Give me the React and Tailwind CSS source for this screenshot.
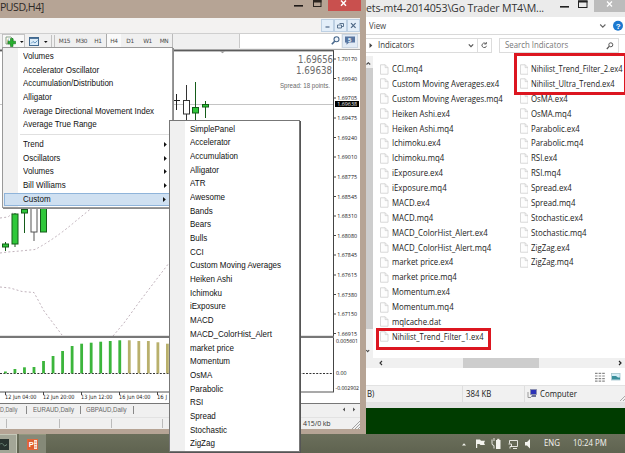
import React from "react";

const menuTop = [
  "Volumes",
  "Accelerator Oscillator",
  "Accumulation/Distribution",
  "Alligator",
  "Average Directional Movement Index",
  "Average True Range",
];
const menuGroups = ["Trend", "Oscillators", "Volumes", "Bill Williams", "Custom"];
const customItems = [
  "SimplePanel", "Accelerator", "Accumulation", "Alligator", "ATR", "Awesome",
  "Bands", "Bears", "Bulls", "CCI", "Custom Moving Averages", "Heiken Ashi",
  "Ichimoku", "iExposure", "MACD", "MACD_ColorHist_Alert", "market price",
  "Momentum", "OsMA", "Parabolic", "RSI", "Spread", "Stochastic", "ZigZag",
];
const filesLeft = [
  "CCI.mq4", "Custom Moving Averages.ex4", "Custom Moving Averages.mq4",
  "Heiken Ashi.ex4", "Heiken Ashi.mq4", "Ichimoku.ex4", "Ichimoku.mq4",
  "iExposure.ex4", "iExposure.mq4", "MACD.ex4", "MACD.mq4",
  "MACD_ColorHist_Alert.ex4", "MACD_ColorHist_Alert.mq4", "market price.ex4",
  "market price.mq4", "Momentum.ex4", "Momentum.mq4", "mqlcache.dat",
  "Nihilist_Trend_Filter_1.ex4",
];
const filesRight = [
  "Nihilist_Trend_Filter_2.ex4", "Nihilist_Ultra_Trend.ex4", "OsMA.ex4",
  "OsMA.mq4", "Parabolic.ex4", "Parabolic.mq4", "RSI.ex4", "RSI.mq4",
  "Spread.ex4", "Spread.mq4", "Stochastic.ex4", "Stochastic.mq4",
  "ZigZag.ex4", "ZigZag.mq4",
];
const prices = [
  ["1.70170", 59], ["1.69940", 78.5], ["1.69705", 98], ["1.69475", 118],
  ["1.69240", 137.5], ["1.69010", 157], ["1.68775", 177], ["1.68545", 196.5],
  ["1.68310", 216], ["1.68080", 235.5], ["1.67845", 255], ["1.67615", 275],
  ["1.67380", 294.5], ["1.67150", 314], ["1.66915", 333.5],
];
const barTops = [371.5, 369, 367.3, 367, 361, 356, 351, 346, 343.7, 342.7, 341.7, 341, 340.3, 340.3, 341, 341, 342.3, 343.7];
const times = [["12 Jun 04:00", 5, 31.5], ["12 Jun 20:00", 43, 31.5], ["13 Jun 12:00", 81, 31.5], ["16 Jun 04:00", 119, 31.5], ["16 J", 157, 10]];

/* Condensed label in the system interface face. */
function Label({ children, tight }) {
  return (
    <span className={tight
      ? "inline-block origin-left scale-x-[0.86] whitespace-nowrap text-[8.8px]"
      : "inline-block origin-left scale-x-[0.89] whitespace-nowrap text-[8.8px]"}>{children}</span>
  );
}

function Candle({ x, top, bottom, high, low, fill = "#2fc83a", stroke = "#145c19", w = 6 }) {
  return (
    <g stroke={stroke} strokeWidth="1">
      <line x1={x} x2={x} y1={high} y2={low} />
      <rect x={x - w / 2} y={top} width={w} height={bottom - top} fill={fill} />
    </g>
  );
}

function Chart() {
  return (
    <svg className="block h-[355px] w-[360px]" viewBox="0 49 360 355" fontFamily="'Liberation Sans', sans-serif">
      <rect x="0" y="49" width="360" height="355" fill="#fff" />
      <rect x="0" y="49" width="360" height="1" fill="#a8a8a8" />
      <rect x="0" y="50" width="334" height="1.4" fill="#5c5c5c" />
      <path d="M220 51.3h5l-2.5 2z" fill="#999" />
      <line x1="0" x2="334" y1="104.5" y2="104.5" stroke="#c4c4c4" />
      <g stroke="#b9a9b3" fill="none" strokeDasharray="2 2.2" strokeWidth="0.9">
        <path d="M0 253L8 252L20 251L35 249.5Q55 239 77 220L93 207" />
        <path d="M0 218L8 217L14 212" />
        <path d="M0 287L10 288L22 291.5L34 292.5L44 311L62 335" />
        <path d="M113 336L124 323L140 301L156 280L169 263" />
      </g>
      <Candle x={5.5} top={244} bottom={247} high={242} low={251} />
      <Candle x={15} top={214} bottom={244} high={213} low={247} />
      <Candle x={24.5} top={209.5} bottom={213} high={207} low={233} />
      <Candle x={34} top={205} bottom={232} high={205} low={241} fill="#fff" stroke="#555" />
      <Candle x={43.5} top={205} bottom={232} high={205} low={232} />
      <g stroke="#222" fill="none"><path d="M176.5 94v16M173 100.5h7" /></g>
      <Candle x={186.5} top={100.5} bottom={114} high={85} low={120} fill="#fff" stroke="#333" />
      <Candle x={195.5} top={107.5} bottom={113} high={82} low={120} />
      <Candle x={205.5} top={104.5} bottom={107} high={101} low={118} />
      <g fill="#6a6a6a" fontFamily="'DejaVu Sans', sans-serif">
        <text x="298" y="62.7" fontSize="9.8" textLength="35" lengthAdjust="spacingAndGlyphs">1.69656</text>
        <text x="296" y="74.2" fontSize="9.8" textLength="36" lengthAdjust="spacingAndGlyphs">1.69638</text>
        <text x="280" y="88" fontSize="6.8" textLength="50" lengthAdjust="spacingAndGlyphs" fontFamily="'Liberation Sans', sans-serif">Spread: 18 points.</text>
      </g>
      <line x1="333.5" x2="333.5" y1="51" y2="392" stroke="#444" />
      <g fontFamily="'Open Sans', 'Noto Sans', sans-serif" fontSize="5.7" fill="#111">
        {prices.map(([p, y]) => (
          <g key={p}>
            <line x1="334" x2="336" y1={y} y2={y} stroke="#333" strokeWidth="0.9" />
            <text x="337.3" y={y + 2.1} textLength="19.7" lengthAdjust="spacingAndGlyphs">{p}</text>
          </g>
        ))}
        <rect x="335" y="101" width="24" height="6" fill="#000" />
        <text x="337.3" y="106.1" textLength="19.7" lengthAdjust="spacingAndGlyphs" fill="#eee">1.69638</text>
        <text x="336" y="343.4" fontSize="5.3" textLength="22" lengthAdjust="spacingAndGlyphs">0.005601</text>
        <text x="336" y="375.1" textLength="10.5" lengthAdjust="spacingAndGlyphs">0.00</text>
        <text x="335.5" y="389.8" fontSize="5" textLength="23.5" lengthAdjust="spacingAndGlyphs">-0.002902</text>
      </g>
      <rect x="0" y="335.8" width="334" height="2.2" fill="#777" />
      <line x1="0" x2="334" y1="373.5" y2="373.5" stroke="#333" strokeDasharray="2 1.4" />
      {barTops.map((t, i) => (
        <rect key={i} x={4 + i * 9.53} y={t} width="2.8" height={373.3 - t} fill={i < 13 ? "#3cb53c" : "#b9b06c"} />
      ))}
      <line x1="0" x2="334" y1="392" y2="392" stroke="#555" strokeWidth="1.2" />
      <g fontFamily="'DejaVu Sans', sans-serif" fontSize="5.9" fill="#222">
        {times.map(([t, x, w]) => (
          <g key={t}>
            <line x1={x + 0.5} x2={x + 0.5} y1="392" y2="395" stroke="#444" />
            <text x={x} y="399.4" textLength={w} lengthAdjust="spacingAndGlyphs">{t}</text>
          </g>
        ))}
      </g>
      <rect x="0" y="403" width="360" height="1" fill="#777" />
    </svg>
  );
}

function MdiButton({ children }) {
  return (
    <div className="flex h-[13px] w-[13px] items-center justify-center border border-[#bdd0e3] bg-[#e3eef9]">
      <svg className="h-[9px] w-[9px]" viewBox="0 0 9 9" fill="none" stroke="#4d6785" strokeWidth="1.2">{children}</svg>
    </div>
  );
}

function TabName({ children }) {
  return <span className="inline-block origin-left scale-x-[0.86] whitespace-nowrap">{children}</span>;
}

function TerminalWindow() {
  return (
    <div className="flex h-[434px] w-[366px] shrink-0 flex-col bg-[#b6a495]">
      <div className="flex h-[18px] w-[366px] items-start">
        <div className="w-[289px] font-['Open_Sans','Noto_Sans',sans-serif] text-[10.6px] leading-[15px] tracking-[-0.5px] text-[#2d2825]">PUSD,H4]</div>
        <svg className="block h-[12px] w-[77px]" viewBox="289 0 77 12">
          <rect x="294" y="5" width="9" height="1.6" fill="#1f1a18" />
          <rect x="313.5" y="0.5" width="7.5" height="6" fill="none" stroke="#2a2420" />
          <rect x="313" y="0" width="8.5" height="2.5" fill="#2a2420" />
          <rect x="328" y="0" width="33" height="11" fill="#c9504e" />
          <path d="M341 0.5L346 5.8M346 0.5L341 5.8" stroke="#fff" strokeWidth="1.4" />
        </svg>
      </div>
      <div className="flex h-[15px] w-[360px] items-center justify-end bg-[#f3f2f1]">
        <MdiButton><path d="M2.5 6h4" /></MdiButton>
        <MdiButton><path d="M3.5 2.5h4v3h-1.5M1.5 4h4v3h-4z" strokeWidth="0.9" /></MdiButton>
        <MdiButton><path d="M2 2.2l4.6 4.6M6.6 2.2L2 6.8" /></MdiButton>
      </div>
      <div className="flex h-[16px] w-[360px] items-start border-t border-[#cfcfcf] bg-[#f0f0f0]">
        <svg className="block h-[15px] w-[56px]" viewBox="0 34 56 15">
          <rect x="2.5" y="34.5" width="22" height="14" fill="#f8f8f8" stroke="#b8b8b8" strokeWidth="0.8" />
          <path d="M6 37h5l2 2v5h-7z" fill="#fff" stroke="#7d9a7d" strokeWidth="0.9" />
          <text x="7" y="42.5" fontSize="6" fontStyle="italic" fontFamily="'Liberation Serif', serif" fill="#397239">f</text>
          <path d="M10.5 38.5h2.5v2.7h2.5v2.6h-2.5v2.7h-2.5v-2.7H8v-2.6h2.5z" fill="#27b02e" stroke="#137318" strokeWidth="0.6" />
          <path d="M20 41h3.6l-1.8 2z" fill="#111" />
          <rect x="29.5" y="37.5" width="9" height="8" fill="#dcecf8" stroke="#41698f" />
          <path d="M29.5 38.3h9" stroke="#41698f" strokeWidth="1.2" />
          <path d="M31 43.5l2-2 2 1.5 2.5-2.5" fill="none" stroke="#4a84b5" strokeWidth="0.8" />
          <path d="M44 41h3.6l-1.8 2z" fill="#111" />
          <path d="M51.5 35v13M54.5 35v13" stroke="#bbb" strokeWidth="0.9" />
        </svg>
        <div className="flex h-[14px] w-[118px] items-center font-['DejaVu_Sans',sans-serif] text-[5.8px] leading-[14px] tracking-[-0.35px] text-[#4a4a4a]">
          <span className="w-[17px] text-center">M15</span>
          <span className="w-[17px] text-center">M30</span>
          <span className="w-[16px] text-center">H1</span>
          <span className="h-[14px] w-[15px] border-l border-[#aaa] bg-[#fafafa] text-center">H4</span>
          <span className="w-[18px] text-center">D1</span>
          <span className="w-[17px] text-center">W1</span>
          <span className="w-[17px] border-r border-[#bbb] text-center">MN</span>
        </div>
        <div className="w-[65px]" />
        <div className="flex h-[14px] w-[102px] justify-end border-l border-[#c9c9c9] bg-white">
          <svg className="mt-[2px] mr-[1px] h-[9px] w-[9px]" viewBox="0 0 9 9" fill="#f2f7fc" stroke="#48688c" strokeWidth="1.1">
            <circle cx="5.5" cy="3.3" r="2.5" /><path d="M3.7 5.2L0.8 8.3" strokeWidth="1.6" />
          </svg>
        </div>
        <svg className="block h-[14px] w-[18px]" viewBox="0 0 18 14">
          <rect x="1.5" y="0.5" width="15" height="13" fill="#e2ebf5" stroke="#cbd6e2" />
          <path d="M4 2.5h10v6H8l-2.5 2.2V8.5H4z" fill="#5875a0" />
          <text x="7" y="7.8" fontSize="6" fontWeight="bold" fill="#fff" fontFamily="'Liberation Sans', sans-serif">5</text>
        </svg>
      </div>
      <Chart />
      <div className="flex h-[13px] w-[360px] items-center bg-[#f0f0f0] pb-[2px] font-['Liberation_Sans',sans-serif] text-[7.1px] text-[#686868]">
        <span className="w-[27px] border-r border-[#888] leading-[8px]"><span className="inline-block origin-left scale-x-[0.76] whitespace-nowrap">D,Daily</span></span>
        <span className="w-[54px] border-r border-[#888] pl-[6px] leading-[8px]"><TabName>EURAUD,Daily</TabName></span>
        <span className="w-[53px] border-r border-[#888] pl-[5px] leading-[8px]"><TabName>GBPAUD,Daily</TabName></span>
        <svg className="ml-auto mr-[4px] h-[5px] w-[14px]" viewBox="0 0 14 5" fill="#555"><path d="M3 0.5v4L0.8 2.5zM11 0.5v4l2.2-2z" /></svg>
      </div>
      <div className="flex h-[12px] w-[360px] items-center border-t border-[#e2e2e2] bg-[#f0f0f0] font-['Open_Sans','Noto_Sans',sans-serif] text-[7px] leading-[9px] text-[#333]">
        <span className="h-[9px] w-[7px] border-r border-[#bbb]" />
        <span className="h-[9px] w-[53px] border-r border-[#bbb]" />
        <span className="h-[9px] w-[52px] border-r border-[#bbb]" />
        <span className="h-[9px] w-[51px] border-r border-[#bbb]" />
        <span className="ml-[140px] w-[30px] whitespace-nowrap tracking-[-0.1px]">415/0 kb</span>
        <svg className="ml-auto h-[10px] w-[9px]" viewBox="0 0 9 10" stroke="#999" strokeWidth="0.9"><path d="M1 10L9 2M4 10L9 5M7 10L9 8" /></svg>
      </div>
    </div>
  );
}

function MenuRow({ label, arrow, active }) {
  return (
    <div className="flex h-[13.7px] items-center">
      <div className={active
        ? "ml-px flex h-[13.5px] w-[166px] items-center border border-[#8fb4da] bg-[#cfe0f1] pl-[18px]"
        : "flex w-[167px] items-center pl-[20px]"}>
        <span className="inline-block origin-left scale-x-[0.91] whitespace-nowrap">{label}</span>
        {arrow && <svg className="ml-auto mr-[3px] h-[5px] w-[3px]" viewBox="0 0 3 5"><path d="M0 0v5l2.8-2.5z" fill="#111" /></svg>}
      </div>
    </div>
  );
}

function IndicatorMenus() {
  return (
    <>
      <div className="absolute left-[2px] top-[47px] h-[161px] w-[171px] border border-[#999] bg-[linear-gradient(90deg,#f0f0f0_0_15px,#fff_15px)] pt-[1.5px] font-['Liberation_Sans',sans-serif] text-[8.8px] leading-[13px] text-[#111] shadow-[1px_1px_0_#8c8c8c]">
        {menuTop.map((m) => <MenuRow key={m} label={m} />)}
        <div className="ml-[17px] mt-[2.5px] mb-[2.6px] h-px bg-[#e0e0e0]" />
        {menuGroups.map((m) => <MenuRow key={m} label={m} arrow active={m === "Custom"} />)}
      </div>
      <div className="absolute left-[169px] top-[120px] h-[332px] w-[131px] border border-[#777] bg-[linear-gradient(90deg,#f0f0f0_0_15px,#fff_15px)] pt-[1.5px] font-['Liberation_Sans',sans-serif] text-[8.8px] leading-[13.7px] text-[#111] shadow-[1px_1px_0_#555]">
        {customItems.map((m) => (
          <div key={m} className="h-[13.7px] pl-[19.5px]">
            <span className="inline-block origin-left scale-x-[0.91] whitespace-nowrap">{m}</span>
          </div>
        ))}
      </div>
    </>
  );
}

function FileRow({ name }) {
  return (
    <div className="flex h-[14.88px] items-center">
      <svg className="mr-[3px] h-[11px] w-[8.5px] shrink-0" viewBox="0 0 9 11" fill="#fdfdfd" stroke="#d2d2d2" strokeWidth="0.9">
        <path d="M0.5 0.5h5l3 3v7h-8zM5.5 0.5v3h3" />
      </svg>
      <Label tight={name.startsWith("Nihilist")}>{name}</Label>
    </div>
  );
}

function ExplorerWindow() {
  return (
    <div className="flex h-[408px] w-[259px] flex-col bg-white font-['Open_Sans','Noto_Sans',sans-serif] text-[#222]">
      <div className="flex h-[17px] items-start bg-[#ebebeb]">
        <div className="w-[190px] whitespace-nowrap text-[10.6px] leading-[17px] tracking-[-0.15px] text-[#333]">ets-mt4-2014053\Go Trader MT4\M...</div>
        <svg className="block h-[12px] w-[69px]" viewBox="556 0 69 12">
          <rect x="560" y="6" width="9" height="1.6" fill="#222" />
          <rect x="578.5" y="1" width="8.5" height="6.5" fill="none" stroke="#222" />
          <rect x="578" y="0.5" width="9.5" height="2" fill="#222" />
          <rect x="594" y="0" width="31" height="12" fill="#bcbcbc" />
          <path d="M607 1.5L612 6.5M612 1.5L607 6.5" stroke="#fff" strokeWidth="1.3" />
        </svg>
      </div>
      <div className="flex h-[18px] items-center border-b border-[#d9d9d9] pl-[3px] text-[#444]">
        <span className="flex pt-[2px]"><Label>View</Label></span>
        <svg className="ml-auto mr-[1px] h-[12px] w-[25px]" viewBox="600 21 25 12">
          <path d="M601.2 25.5l2.6 2.6 2.6-2.6" fill="none" stroke="#666" strokeWidth="1.1" />
          <circle cx="619" cy="26.7" r="5" fill="#1c78cf" />
          <text x="616.8" y="29.6" fontSize="8" fontWeight="bold" fill="#fff" fontFamily="'Liberation Sans', sans-serif">?</text>
        </svg>
      </div>
      <div className="flex h-[21px] items-center text-[#333]">
        <div className="flex h-[15px] w-[126px] items-center border-y border-r border-[#dcdcdc]">
          <svg className="ml-[3px] h-[5px] w-[4px]" viewBox="0 0 4 5"><path d="M0.5 0v5L3.3 2.5z" fill="#444" /></svg>
          <span className="ml-[5px] flex"><Label>Indicators</Label></span>
          <svg className="ml-auto h-[13px] w-[24px]" viewBox="0 0 24 13" fill="none" stroke="#555">
            <path d="M1.8 5.3l2.2 2.3 2.2-2.3" strokeWidth="1.2" /><path d="M10.5 0v13" stroke="#ddd" />
            <path d="M18.8 4.6a2.3 2.3 0 1 0 0.7 2.2M19.3 3v2h-2" strokeWidth="0.9" />
          </svg>
        </div>
        <div className="ml-[7px] flex h-[15px] w-[120px] items-center border border-[#dcdcdc] pl-[5px] text-[#777]">
          <Label>Search Indicators</Label>
          <svg className="ml-auto mr-[4px] h-[8px] w-[8px]" viewBox="0 0 8 8" fill="none" stroke="#555"><circle cx="4.8" cy="2.8" r="2" /><path d="M3.2 4.3L0.8 7" strokeWidth="1.2" /></svg>
        </div>
      </div>
      <div className="flex h-[302px] leading-[14px]">
        <div className="flex h-[302px] w-[7px] flex-col bg-[#f0f0f0]">
          <svg className="mt-[3px] h-[9px] w-[6px]" viewBox="0 0 6 9" fill="none" stroke="#444"><path d="M0.5 5.5l1.8-1.8L4.2 5.5" strokeWidth="1.1" /></svg>
          <div className="h-[261px] bg-[#cdcdcd]" />
          <svg className="mt-auto h-[10px] w-[6px]" viewBox="0 0 6 10" fill="none" stroke="#444"><path d="M0.2 2l1.5 1.7L3.2 2" strokeWidth="1.1" /></svg>
        </div>
        <div className="w-[140px] pl-[7px] pt-[5.6px]">{filesLeft.map((f) => <FileRow key={f} name={f} />)}</div>
        <div className="w-[112px] pl-[6.5px] pt-[5.6px]">{filesRight.map((f) => <FileRow key={f} name={f} />)}</div>
      </div>
      <div className="flex h-[10px] items-center bg-[#f0f0f0]">
        <div className="flex w-[97px] pl-[13px]"><svg className="h-[6px] w-[4px]" viewBox="0 0 4 6"><path d="M3 1L1 3l2 2" fill="none" stroke="#333" strokeWidth="1.1" /></svg></div>
        <div className="h-[10px] w-[76px] bg-[#cdcdcd]" />
        <svg className="ml-auto mr-[3px] h-[6px] w-[4px]" viewBox="0 0 4 6"><path d="M1 1l2 2-2 2" fill="none" stroke="#222" strokeWidth="1.2" /></svg>
      </div>
      <div className="flex h-[17px] items-center justify-end pr-[4px]">
        <svg className="block h-[12px] w-[28px]" viewBox="593 371 28 12">
          <g stroke="#8a8a8a" strokeDasharray="2.6 1" strokeWidth="1.2"><path d="M595 373.4h10M595 376h10M595 378.6h10M595 381.2h10" /></g>
          <rect x="611.5" y="373.5" width="8.5" height="6.5" fill="#d4edf5" stroke="#a4c4cd" strokeWidth="0.8" />
          <path d="M612 376h4l2 1.5h2v2h-8z" fill="#388e9b" />
        </svg>
      </div>
      <div className="flex h-[18px] items-center border-y border-[#e2e2e2] bg-[#f1f1f1] text-[#222]">
        <span className="flex w-[97px] border-r border-[#dedede] pl-px pt-[2px]"><Label>B)</Label></span>
        <span className="flex w-[62px] border-r border-[#dedede] pl-[3px] pt-[2px]"><Label>384 KB</Label></span>
        <svg className="ml-[2px] mr-[2px] h-[10px] w-[11px]" viewBox="0 0 11 10">
          <rect x="3.5" y="0.5" width="6" height="5" fill="#2b32b7" stroke="#8a8fa8" strokeWidth="0.8" />
          <path d="M5 6h4v2H4z" fill="#6b7294" /><path d="M1 3v5.5h3" stroke="#999" fill="none" />
        </svg>
        <span className="flex pt-[2px]"><Label>Computer</Label></span>
        <svg className="ml-auto mt-[7px] h-[6px] w-[5px]" viewBox="0 0 5 6" stroke="#aaa"><path d="M0 6L5 1M3 6l2-2" /></svg>
      </div>
      <div className="h-[5px] bg-[#e3e3e3]" />
    </div>
  );
}

function Taskbar() {
  return (
    <div className="flex h-[19px] items-center bg-[linear-gradient(#6b6f5b,#5f6350)] font-['Open_Sans','Noto_Sans',sans-serif] text-[#f4f4f0]">
      <div className="flex h-[19px] w-[17px] items-center border-r border-t border-[#c5c8b8] bg-[#a3a697]">
        <svg className="h-[11px] w-[9px]" viewBox="0 0 9 11"><rect width="9" height="11" fill="#28332f" /><path d="M0 5.5q1.5-3 3 0t4 0" fill="none" stroke="#6c8778" /></svg>
      </div>
      <div className="ml-[2px] flex h-[19px] w-[27px] items-center justify-center border-t border-[#94987f] bg-[#858978]">
        <svg className="h-[11px] w-[11px]" viewBox="0 0 11 11">
          <rect x="0.5" y="0.5" width="10" height="10" fill="#fbe9e0" stroke="#e0683c" />
          <path d="M1 1h6v9H1z" fill="#df5f30" />
          <text x="1.7" y="8" fontSize="7.5" fontWeight="bold" fill="#fff" fontFamily="'Liberation Sans', sans-serif">P</text>
          <path d="M7.5 3h2M7.5 5.5h2M7.5 8h2" stroke="#d9552b" strokeWidth="0.7" />
        </svg>
      </div>
      <svg className="ml-[415px] block h-[14px] w-[72px]" viewBox="461 437 72 14" fill="#f3f3ee">
        <path d="M462 445.5h4l-2-2.2z" />
        <path d="M476 439.5h4l1 1.2h4l-1 2.2 1 2h-4.5l-1-1h-2.3v4H476z" />
        <path d="M492 439.5v4q0 2 2 2v3M494 438v3" stroke="#f3f3ee" fill="none" strokeWidth="0.9" />
        <rect x="496" y="440" width="4.5" height="9" /><rect x="497.2" y="438.8" width="2.2" height="1.5" />
        <path d="M509.5 440.5h8v6h-6.5M509.5 440.5v3M508.5 444h3v2.5h-1.5v2M513 448.5h4" fill="none" stroke="#f3f3ee" strokeWidth="0.9" />
        <path d="M525 442h2l3-3v9.5l-3-3h-2z" />
      </svg>
      <span className="ml-[11px] flex w-[29px] pt-[1px]"><Label>ENG</Label></span>
      <span className="flex pt-[1px]"><Label>10:24 PM</Label></span>
    </div>
  );
}

export default function App() {
  return (
    <div className="relative flex h-[453px] w-[625px] flex-col overflow-hidden bg-[#003c00]">
      <div className="flex h-[434px]">
        <TerminalWindow />
        <ExplorerWindow />
      </div>
      <Taskbar />
      <IndicatorMenus />
      <div className="absolute left-[514px] top-[53px] h-[42px] w-[113px] border-[3px] border-[#dc1620]" />
      <div className="absolute left-[376px] top-[328px] h-[22px] w-[115px] border-[3px] border-[#dc1620]" />
    </div>
  );
}
